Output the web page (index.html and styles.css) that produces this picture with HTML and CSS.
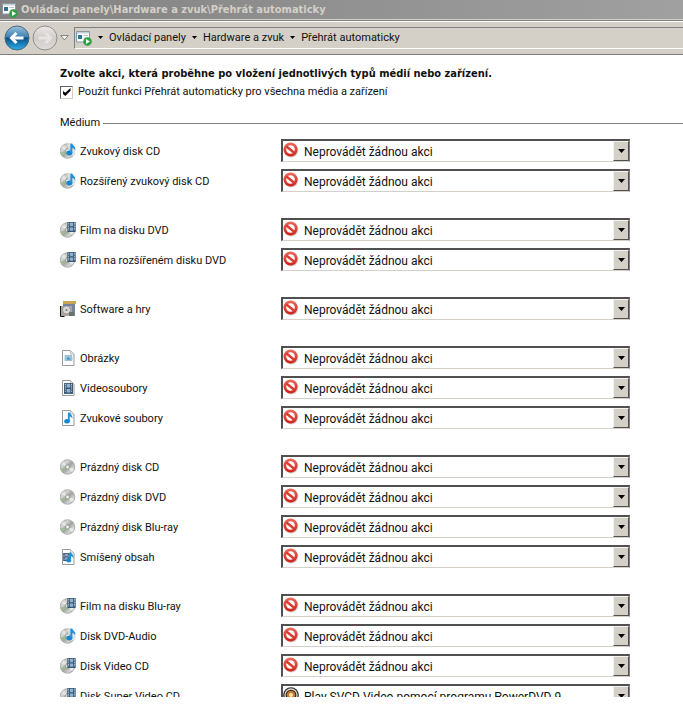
FILE: index.html
```html
<!DOCTYPE html>
<html lang="cs">
<head>
<meta charset="utf-8">
<title>Přehrát automaticky</title>
<link rel="stylesheet" href="styles.css">
</head>
<body>
<svg class="defs" aria-hidden="true">
  <defs>
    <linearGradient id="silver" x1="0" y1="0" x2="1" y2="1">
      <stop offset="0" stop-color="#a6a9a6"/><stop offset=".3" stop-color="#d3d6d2"/><stop offset=".5" stop-color="#9fa2a0"/><stop offset=".75" stop-color="#d6d6d6"/><stop offset="1" stop-color="#7d7f7e"/>
    </linearGradient>
    <linearGradient id="blue" x1="0" y1="0" x2="0" y2="1">
      <stop offset="0" stop-color="#9cc3dc"/><stop offset=".45" stop-color="#3d83b4"/><stop offset=".5" stop-color="#0c4f88"/><stop offset="1" stop-color="#2cb0e8"/>
    </linearGradient>
    <linearGradient id="pale" x1="0" y1="0" x2="0" y2="1">
      <stop offset="0" stop-color="#eceae8"/><stop offset=".5" stop-color="#cfccca"/><stop offset="1" stop-color="#dedcda"/>
    </linearGradient>
    <linearGradient id="red" x1="0" y1="0" x2="0" y2="1">
      <stop offset="0" stop-color="#ee6a5c"/><stop offset="1" stop-color="#cf2018"/>
    </linearGradient>
  </defs>
  <symbol id="disc" viewBox="0 0 16 16">
    <circle cx="7.5" cy="8" r="7.300" fill="url(#silver)" stroke="#999b9a" stroke-width=".7"/>
    <path d="M7.5 8 1 5.5A7 7 0 0 1 4 2Z" fill="#f2f4f2" opacity=".6"/>
    <path d="M7.5 8 .8 9.5A7 7 0 0 0 3 13.3Z" fill="#98bd88" opacity=".8"/>
    <path d="M7.5 8 12 13.2A7 7 0 0 0 14 10Z" fill="#f6f6f6" opacity=".7"/>
    <circle cx="7.5" cy="8" r="2.2" fill="#cfd1cf" stroke="#858786" stroke-width=".6"/>
    <circle cx="7.5" cy="8" r=".9" fill="#fff"/>
  </symbol>
  <symbol id="note" viewBox="0 0 11 15">
    <ellipse cx="3.700" cy="11.500" rx="3.500" ry="2.800" fill="#1486d0"/>
    <path d="M4.800 11.500V.5h2.200c.4 2.600 4.300 3.400 3.300 8-.6-1.700-1.600-2.500-3.300-2.800v5.800Z" fill="#1c92dc"/>
  </symbol>
  <symbol id="film" viewBox="0 0 10 12">
    <path d="M0 0h10v12H0Z" fill="#365674"/>
    <path d="M3 1h4v4H3ZM3 6.500h4v4H3Z" fill="#8fb2cf"/>
    <path d="M1 1h1v1H1ZM1 3h1v1H1ZM1 5h1v1H1ZM1 7h1v1H1ZM1 9h1v1H1ZM8 1h1v1H8ZM8 3h1v1H8ZM8 5h1v1H8ZM8 7h1v1H8ZM8 9h1v1H8Z" fill="#e4edf4"/>
  </symbol>
  <symbol id="sheet" viewBox="0 0 16 16">
    <path d="M2.500.5h8l3.500 3.500v11.500H2.500Z" fill="#fbfcfd" stroke="#9a9a9c"/>
    <path d="M10.500.5V4H14" fill="#e8e8ea" stroke="#b5b5b8" stroke-width=".8"/>
  </symbol>
  <symbol id="disc-audio" viewBox="0 0 16 16">
    <use href="#disc" width="16" height="16"/>
    <path d="M8 1h8v11H8Z" fill="#e8f5fd" opacity=".6"/>
    <use href="#note" x="6" y="0" width="10" height="13"/>
  </symbol>
  <symbol id="disc-film" viewBox="0 0 16 16">
    <use href="#disc" width="16" height="16"/>
    <use href="#film" x="7" y="0" width="9" height="10"/>
  </symbol>
  <symbol id="software" viewBox="0 0 16 16">
    <path d="M3 1h12v14H3Z" fill="#7484a0"/>
    <path d="M3 0h13v3H3Z" fill="#c9a64f"/>
    <path d="M1 5h11v10H1Z" fill="#aaa69a"/>
    <circle cx="6.500" cy="9" r="4" fill="#d9dad5" stroke="#8a8a82" stroke-width=".7"/>
    <circle cx="6.500" cy="9" r="1" fill="#737a78"/>
    <path d="M9 11h5v4H9Z" fill="#6a726a"/>
    <path d="M.5 5v10.500h4" fill="none" stroke="#111"/>
  </symbol>
  <symbol id="picture" viewBox="0 0 16 16">
    <use href="#sheet" width="16" height="16"/>
    <path d="M5 5.500h7v5H5Z" fill="#9cc8de" stroke="#7fa9c0" stroke-width=".6"/>
    <path d="M6.500 9.500 8 7l3 2.500Z" fill="#3e87ad"/>
  </symbol>
  <symbol id="video" viewBox="0 0 16 16">
    <use href="#sheet" width="16" height="16"/>
    <use href="#film" x="4" y="3" width="9" height="11"/>
  </symbol>
  <symbol id="audio" viewBox="0 0 16 16">
    <use href="#sheet" width="16" height="16"/>
    <use href="#note" x="4" y="2" width="9" height="12"/>
  </symbol>
  <symbol id="mixed" viewBox="0 0 16 16">
    <use href="#sheet" width="16" height="16"/>
    <use href="#film" x="3" y="4" width="7" height="8"/>
    <use href="#note" x="6" y="3" width="8" height="11"/>
  </symbol>
  <symbol id="none" viewBox="0 0 16 16">
    <circle cx="8.300" cy="8.400" r="7" fill="#b9b1ae" opacity=".7"/>
    <circle cx="7.500" cy="7.500" r="7" fill="url(#red)"/>
    <circle cx="7.500" cy="7.500" r="4.300" fill="#fff"/>
    <path d="m3.500 4.500 8 6.500" stroke="#dc3b30" stroke-width="2.400"/>
  </symbol>
  <symbol id="power" viewBox="0 0 16 16">
    <circle cx="8" cy="8" r="7.800" fill="#292623"/>
    <circle cx="8" cy="8" r="6" fill="none" stroke="#d8d4ce" stroke-width="1.300"/>
    <circle cx="8" cy="8" r="4.300" fill="#c97b2c"/>
    <circle cx="8" cy="8" r="2" fill="#f6e1b0"/>
  </symbol>
  <symbol id="autoplay" viewBox="0 0 16 16">
    <path d="M.5 1.500h13v10.500H.5Z" fill="#fff" stroke="#8b99a3"/>
    <path d="M1 2h12v1.500H1Z" fill="#c3d0d8"/>
    <path d="M2 5h4v4H2Z" fill="#2f7396"/>
    <path d="M7.500 5.500H12M7.500 8H12" stroke="#b9c4ca"/>
    <circle cx="11.500" cy="11.500" r="4.300" fill="#2fa043"/>
    <path d="m10 9 4 2.500-4 2.500Z" fill="#fff"/>
  </symbol>
  <symbol id="arrow" viewBox="0 0 7 4"><path d="M0 0h7L3.500 4Z" fill="#000"/></symbol>
</svg>

<header class="titlebar">
  <svg class="icon"><use href="#autoplay"/></svg>
  <h1>Ovládací panely\Hardware a zvuk\Přehrát automaticky</h1>
</header>

<nav class="toolbar" aria-label="Navigace">
  <div class="travel">
    <button type="button" aria-label="Zpět"><svg viewBox="0 0 26 26"><circle cx="13" cy="13" r="12" fill="url(#blue)" stroke="#50677a"/><path d="M19.500 13H8M12.500 8l-5 5 5 5" fill="none" stroke="#fff" stroke-width="3"/></svg></button>
    <button type="button" aria-label="Vpřed"><svg viewBox="0 0 26 26"><circle cx="13" cy="13" r="12" fill="url(#pale)" stroke="#918f8e"/><path d="M6.500 13H18M13.500 8l5 5-5 5" fill="none" stroke="#e6e4e2" stroke-width="3"/></svg></button>
    <button type="button" class="recent" aria-label="Poslední stránky"><svg viewBox="0 0 9 6"><path d="M.7.5h7.600L4.500 5Z" fill="#f4f3f1" stroke="#6f6d6a" stroke-width=".8"/></svg></button>
  </div>
  <div class="address">
    <svg class="icon"><use href="#autoplay"/></svg>
    <svg class="sep"><use href="#arrow"/></svg><a href="#">Ovládací panely</a>
    <svg class="sep"><use href="#arrow"/></svg><a href="#">Hardware a zvuk</a>
    <svg class="sep"><use href="#arrow"/></svg><a href="#">Přehrát automaticky</a>
  </div>
</nav>

<main>
  <h2>Zvolte akci, která proběhne po vložení jednotlivých typů médií nebo zařízení.</h2>
  <label class="check"><input type="checkbox" checked>Použít funkci Přehrát automaticky pro všechna média a zařízení</label>
  <h3>Médium</h3>

  <form class="groups">
    <div class="group">
      <div class="row"><svg class="icon"><use href="#disc-audio"/></svg><label for="m1">Zvukový disk CD</label><div class="combo"><select id="m1"><option>Neprovádět žádnou akci</option></select><svg class="icon"><use href="#none"/></svg><span class="drop"><svg><use href="#arrow"/></svg></span></div></div>
      <div class="row"><svg class="icon"><use href="#disc-audio"/></svg><label for="m2">Rozšířený zvukový disk CD</label><div class="combo"><select id="m2"><option>Neprovádět žádnou akci</option></select><svg class="icon"><use href="#none"/></svg><span class="drop"><svg><use href="#arrow"/></svg></span></div></div>
    </div>
    <div class="group">
      <div class="row"><svg class="icon"><use href="#disc-film"/></svg><label for="m3">Film na disku DVD</label><div class="combo"><select id="m3"><option>Neprovádět žádnou akci</option></select><svg class="icon"><use href="#none"/></svg><span class="drop"><svg><use href="#arrow"/></svg></span></div></div>
      <div class="row"><svg class="icon"><use href="#disc-film"/></svg><label for="m4">Film na rozšířeném disku DVD</label><div class="combo"><select id="m4"><option>Neprovádět žádnou akci</option></select><svg class="icon"><use href="#none"/></svg><span class="drop"><svg><use href="#arrow"/></svg></span></div></div>
    </div>
    <div class="group">
      <div class="row"><svg class="icon"><use href="#software"/></svg><label for="m5">Software a hry</label><div class="combo"><select id="m5"><option>Neprovádět žádnou akci</option></select><svg class="icon"><use href="#none"/></svg><span class="drop"><svg><use href="#arrow"/></svg></span></div></div>
    </div>
    <div class="group">
      <div class="row"><svg class="icon"><use href="#picture"/></svg><label for="m6">Obrázky</label><div class="combo"><select id="m6"><option>Neprovádět žádnou akci</option></select><svg class="icon"><use href="#none"/></svg><span class="drop"><svg><use href="#arrow"/></svg></span></div></div>
      <div class="row"><svg class="icon"><use href="#video"/></svg><label for="m7">Videosoubory</label><div class="combo"><select id="m7"><option>Neprovádět žádnou akci</option></select><svg class="icon"><use href="#none"/></svg><span class="drop"><svg><use href="#arrow"/></svg></span></div></div>
      <div class="row"><svg class="icon"><use href="#audio"/></svg><label for="m8">Zvukové soubory</label><div class="combo"><select id="m8"><option>Neprovádět žádnou akci</option></select><svg class="icon"><use href="#none"/></svg><span class="drop"><svg><use href="#arrow"/></svg></span></div></div>
    </div>
    <div class="group">
      <div class="row"><svg class="icon"><use href="#disc"/></svg><label for="m9">Prázdný disk CD</label><div class="combo"><select id="m9"><option>Neprovádět žádnou akci</option></select><svg class="icon"><use href="#none"/></svg><span class="drop"><svg><use href="#arrow"/></svg></span></div></div>
      <div class="row"><svg class="icon"><use href="#disc"/></svg><label for="m10">Prázdný disk DVD</label><div class="combo"><select id="m10"><option>Neprovádět žádnou akci</option></select><svg class="icon"><use href="#none"/></svg><span class="drop"><svg><use href="#arrow"/></svg></span></div></div>
      <div class="row"><svg class="icon"><use href="#disc"/></svg><label for="m11">Prázdný disk Blu-ray</label><div class="combo"><select id="m11"><option>Neprovádět žádnou akci</option></select><svg class="icon"><use href="#none"/></svg><span class="drop"><svg><use href="#arrow"/></svg></span></div></div>
      <div class="row"><svg class="icon"><use href="#mixed"/></svg><label for="m12">Smíšený obsah</label><div class="combo"><select id="m12"><option>Neprovádět žádnou akci</option></select><svg class="icon"><use href="#none"/></svg><span class="drop"><svg><use href="#arrow"/></svg></span></div></div>
    </div>
    <div class="group">
      <div class="row"><svg class="icon"><use href="#disc-film"/></svg><label for="m13">Film na disku Blu-ray</label><div class="combo"><select id="m13"><option>Neprovádět žádnou akci</option></select><svg class="icon"><use href="#none"/></svg><span class="drop"><svg><use href="#arrow"/></svg></span></div></div>
      <div class="row"><svg class="icon"><use href="#disc-audio"/></svg><label for="m14">Disk DVD-Audio</label><div class="combo"><select id="m14"><option>Neprovádět žádnou akci</option></select><svg class="icon"><use href="#none"/></svg><span class="drop"><svg><use href="#arrow"/></svg></span></div></div>
      <div class="row"><svg class="icon"><use href="#disc-film"/></svg><label for="m15">Disk Video CD</label><div class="combo"><select id="m15"><option>Neprovádět žádnou akci</option></select><svg class="icon"><use href="#none"/></svg><span class="drop"><svg><use href="#arrow"/></svg></span></div></div>
      <div class="row"><svg class="icon"><use href="#disc-film"/></svg><label for="m16">Disk Super Video CD</label><div class="combo"><select id="m16"><option>Play SVCD Video pomocí programu PowerDVD 9</option></select><svg class="icon"><use href="#power"/></svg><span class="drop"><svg><use href="#arrow"/></svg></span></div></div>
    </div>
  </form>
</main>
</body>
</html>
```
FILE: styles.css
```css
* { box-sizing: border-box; }

body {
  margin: 0;
  height: 100vh;
  padding-bottom: 19px;
  display: flex;
  flex-direction: column;
  overflow: hidden;
  background: #fff;
  color: #111;
  font: 11px/16px Roboto, Tahoma, sans-serif;
}

.defs { position: absolute; width: 0; height: 0; }
.icon { width: 16px; height: 16px; flex: none; }
h1, h2, h3 { margin: 0; font-size: 11px; white-space: nowrap; }
h1, h2 { font-family: "DejaVu Sans Condensed", Tahoma, sans-serif; }

.titlebar {
  flex: none;
  display: flex;
  align-items: center;
  gap: 3px;
  height: 20px;
  padding-left: 2px;
  background: linear-gradient(90deg, #828282, #a0a0a0);
  border-bottom: 1px solid #d4d0c8;
}
.titlebar h1 { color: #d4d0c8; }

.toolbar {
  flex: none;
  display: flex;
  align-items: center;
  height: 35px;
  background: #d4d0c8;
  border-top: 1px solid #808080;
  border-bottom: 1px solid #808080;
  box-shadow: inset 0 1px #fff;
}
.travel { display: flex; align-items: center; width: 74px; padding-left: 4px; gap: 2px; }
.travel button { width: 26px; height: 26px; padding: 0; border: 0; background: none; }
.travel svg { display: block; width: 100%; height: 100%; }
.travel .recent { width: 9px; height: 6px; }

.address {
  flex: 1;
  display: flex;
  align-items: center;
  height: 22px;
  padding-left: 1px;
  border-top: 1px solid #808080;
  border-left: 1px solid #808080;
  border-bottom: 1px solid #fff;
}
.address a { color: #111; text-decoration: none; white-space: nowrap; }
.sep { width: 5px; height: 3px; margin: 0 6px; }

main {
  flex: 1;
  min-height: 0;
  overflow: hidden;
  padding: 11px 0 0 60px;
}
.check { display: flex; align-items: center; gap: 5px; height: 20px; }
.check input {
  appearance: none;
  display: grid;
  place-items: center;
  width: 13px;
  height: 13px;
  margin: 0;
  border: 1px solid;
  border-color: #606060 #d4d0c8 #d4d0c8 #606060;
  background: #fff;
}
.check input:checked::before {
  content: "";
  width: 8px;
  height: 8px;
  background: #000;
  clip-path: polygon(0 30%, 35% 60%, 100% 0, 100% 35%, 35% 100%, 0 68%);
}
h3 {
  display: flex;
  align-items: center;
  gap: 3px;
  margin: 13px 0 8px;
  font-weight: normal;
}
h3::after { content: ""; flex: 1; height: 1px; background: #808080; }

.groups { display: grid; gap: 26px; padding-right: 53px; }
.group { display: grid; gap: 7px; }
.row {
  display: grid;
  grid-template-columns: 20px 201px 1fr;
  align-items: center;
}
.row label { padding-top: 2px; white-space: nowrap; }

.combo { position: relative; }
.combo select {
  appearance: none;
  display: block;
  width: 100%;
  height: 23px;
  margin: 0;
  padding: 2px 20px 0 21px;
  border: 1px solid;
  border-width: 2px 1px 1px 2px;
  border-color: #505050 #808080 #d4d0c8 #505050;
  border-radius: 0;
  background: #fff;
  color: #111;
  font: 12px/16px Roboto, "Segoe UI", sans-serif;
}
.combo .icon { position: absolute; left: 2px; top: 3px; pointer-events: none; }
.drop {
  position: absolute;
  top: 2px;
  right: 1px;
  bottom: 1px;
  width: 16px;
  display: grid;
  place-items: center;
  background: #d4d0c8;
  border: 1px solid;
  border-color: #f4f3f0 #505050 #505050 #f4f3f0;
  pointer-events: none;
}
.drop svg { width: 7px; height: 4px; }
```
